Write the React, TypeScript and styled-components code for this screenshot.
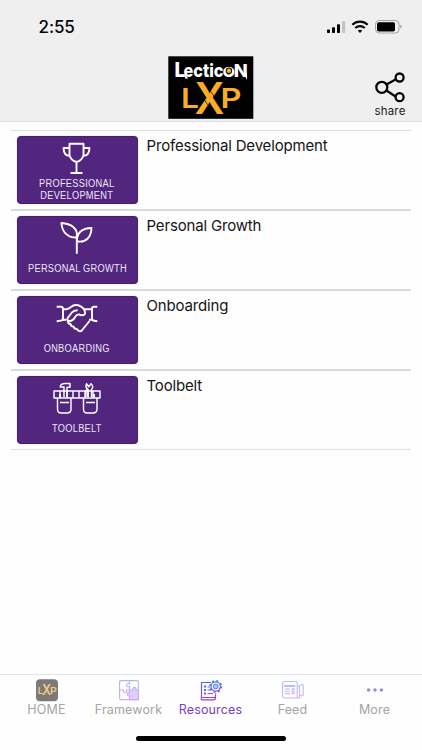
import React from "react";
import styled, { createGlobalStyle } from "styled-components";

const GlobalStyle = createGlobalStyle`
  * { box-sizing: border-box; }
  body { margin: 0; background: #fefefe; font-family: Inter, "Liberation Sans", sans-serif; }
  svg { display: block; flex: none; }
`;

const Screen = styled.div`
  width: 422px;
  height: 750px;
  display: flex;
  flex-direction: column;
  overflow: hidden;
  background: #fefefe;
`;

const Header = styled.header`
  height: 122px;
  flex: none;
  background: #efefef;
  border-bottom: 1px solid #dcdfea;
`;

const StatusBar = styled.div`
  height: 56px;
  display: flex;
  justify-content: space-between;
  padding: 17px 19px 0 38.5px;
`;

const Clock = styled.div`
  font-size: 17px;
  line-height: 21px;
  font-weight: 500;
  letter-spacing: -0.1px;
  color: #080808;
`;

const Brand = styled.div`
  display: grid;
  grid-template-columns: 1fr 86px 1fr;
`;

const LogoCell = styled.div`
  grid-column: 2;
`;

const ShareButton = styled.button`
  justify-self: end;
  width: 40px;
  margin: 15px 12px 0 0;
  padding: 0;
  border: 0;
  background: none;
  display: flex;
  flex-direction: column;
  align-items: center;
  gap: 1px;
  font: 400 11.5px/14px Inter, sans-serif;
  letter-spacing: 0.2px;
  color: #222;
`;

const List = styled.main`
  flex: 1;
  padding: 8px 11px 0;
`;

const Row = styled.div<{ $first?: boolean }>`
  height: ${(p) => (p.$first ? 81 : 80)}px;
  display: flex;
  gap: 9px;
  padding: 5px 0 0 5.5px;
  border-top: ${(p) => (p.$first ? "1px solid #e0e0e0" : "0")};
  border-bottom: 2px solid #dadada;
  &:last-child { height: 79px; border-bottom: 1px solid #e0e0e0; }
`;

const Card = styled.div`
  width: 121px;
  height: 68px;
  flex: none;
  display: flex;
  flex-direction: column;
  align-items: center;
  border-radius: 4px;
  border: 1px solid #432069;
  background: #52257f;
  box-shadow: 0 0 1px #8c78a0;
`;

const CardLabel = styled.div<{ $top: number }>`
  margin-top: ${(p) => p.$top}px;
  font: 400 10px/12px "Liberation Sans", Arial, sans-serif;
  letter-spacing: 0.3px;
  transform: scaleX(0.925);
  text-align: center;
  white-space: pre;
  color: #eee6f6;
`;

const Title = styled.div`
  margin-top: 1px;
  font-size: 15px;
  line-height: 18px;
  letter-spacing: -0.17px;
  color: #151515;
`;

const TabBar = styled.nav`
  height: 76px;
  flex: none;
  display: grid;
  grid-template-columns: repeat(5, 82px);
  justify-content: center;
  grid-template-rows: 61px 6px;
  padding-right: 1px;
  border-top: 1px solid #dfe2f2;
`;

const Tab = styled.div<{ $active?: boolean }>`
  display: flex;
  flex-direction: column;
  align-items: center;
  padding-top: 4px;
  font-size: 12.5px;
  line-height: 16px;
  letter-spacing: 0.15px;
  color: ${(p) => (p.$active ? "#7c3fca" : "#a5a5a5")};
`;

const HomeIndicator = styled.div`
  grid-column: 1 / -1;
  justify-self: center;
  width: 150px;
  height: 5px;
  margin-left: 1px;
  border-radius: 3px;
  background: #000;
`;

const StatusIcons = () => (
  <svg width="80" height="20" viewBox="323 17 80 20">
    <rect x="327" y="29.5" width="3" height="3.5" rx=".8" />
    <rect x="332" y="27.3" width="3" height="5.7" rx=".8" />
    <rect x="337" y="24.3" width="3" height="8.7" rx=".8" />
    <rect x="342" y="21.2" width="3.2" height="11.8" rx=".8" fill="#c4c4c4" />
    <g fill="none" stroke="#080808" strokeWidth="2.1">
      <path d="M352.3 24.8a11 11 0 0 1 15.4 0" />
      <path d="M355.2 28a7 7 0 0 1 9.6 0" />
    </g>
    <path d="M357.7 30.6q2.3-1.7 4.6 0L360 33Z" />
    <rect x="375.5" y="20.5" width="23.5" height="12.5" rx="3.7" fill="none" stroke="#a3a3a3" />
    <rect x="377" y="22.2" width="18" height="9.3" rx="1.8" />
    <path d="M400.3 24.8q3 1.9 0 3.8Z" fill="#999" />
  </svg>
);

const Logo = () => (
  <svg width="86" height="63" viewBox="0 0 86 63">
    <rect x=".3" y=".3" width="85" height="62.5" fill="#000" />
    <text y="20.5" fontFamily="Inter, sans-serif" fontWeight="800" fill="#fff">
      <tspan x="6.5" fontSize="20" textLength="11" lengthAdjust="spacingAndGlyphs">L</tspan>
      <tspan x="15.5" fontSize="18.5" textLength="40" lengthAdjust="spacingAndGlyphs">ectic</tspan>
      <tspan x="54.5" fontSize="18" textLength="12.5" lengthAdjust="spacingAndGlyphs">o</tspan>
      <tspan x="65.8" fontSize="17.5" textLength="14" lengthAdjust="spacingAndGlyphs">N</tspan>
    </text>
    <path d="m75.5 17 3.5 7V17ZM17 19l3.5 3.5H17Z" fill="#fff" />
    <circle cx="60.9" cy="14.7" r="3.2" fill="#000" />
    <circle cx="60.9" cy="14.7" r="2.3" fill="#f9ae25" />
    <text fontFamily="Inter, sans-serif" fontWeight="600" fill="#f9ae25">
      <tspan x="13" y="51.7" fontSize="26.5" textLength="18" lengthAdjust="spacingAndGlyphs">L</tspan>
      <tspan x="26.5" y="58" fontSize="43.5" fontWeight="600" textLength="30" lengthAdjust="spacingAndGlyphs">X</tspan>
      <tspan x="52.5" y="51.7" fontSize="26.5" textLength="21" lengthAdjust="spacingAndGlyphs">P</tspan>
    </text>
    <path d="m43 35.5 3.7 6M36.3 43.5l3.7 6" stroke="#000" strokeWidth=".7" />
  </svg>
);

const ShareIcon = () => (
  <svg width="32" height="32" viewBox="0 0 32 32" fill="none" stroke="#050505" strokeWidth="2.3">
    <path d="m12.5 13.5 9-5m-9 11 9 6" />
    <circle cx="7.8" cy="16.3" r="5.5" />
    <circle cx="25.6" cy="6.5" r="4" />
    <circle cx="25.6" cy="26.2" r="4" />
  </svg>
);

const cardIcon = {
  width: 50,
  height: 40,
  viewBox: "0 0 50 40",
  fill: "none",
  stroke: "#fff",
  strokeWidth: 1.9,
  strokeLinejoin: "round" as const,
};

const TrophyIcon = () => (
  <svg {...cardIcon}>
    <path d="M17.5 6.8h14v11.4q-1.5 5.3-7 6.8-5.5-1.5-7-6.8ZM17.5 11h-6q.2 7.8 6.2 7.8M31.5 11h6q-.2 7.8-6.2 7.8M24.5 25v10.5M18.5 36h12" />
  </svg>
);

const SproutIcon = () => (
  <svg {...cardIcon}>
    <path d="M24.8 36.7V20.5C15 20.8 10 14.5 9.4 6c9.5.6 17 5.2 15.4 14.5M25 24.3c-.5-8 4.5-13 14.5-13.3-.2 8.5-5 15-14.5 13.3Z" />
  </svg>
);

const HandshakeIcon = () => (
  <svg {...cardIcon}>
    <path d="M4.7 9.8H9q2 0 2 2.2v9q0 2.6-2.3 2.6l-4 .6M45.3 9.8H42q-2 0-2 2.2v9q0 2.6 2.2 2.8l3.1.4" />
    <path d="M11 12.2h3.5C18.5 12 19 8 24 8q4.5 0 8 4.2h8M11 22.8h3.5M40 22.8h-3" />
    <path d="M32 12.2q2.8 5.3-1.2 6-2.4.2-4-.8-2.2 0-3.7 2.6-2 3.8-5.6 4-2.6-.2-2-2.7l4.2-5.6q2.2-2.6 6-2.5" />
    <path d="M16 24q-.2 2.8 2.6 3 .1 2.6 3 2.6.3 2.3 3 2.3l2 1.8q1.8 1.3 3.2-.2l7.7-9.5" />
  </svg>
);

const ToolbeltIcon = () => (
  <svg {...cardIcon} strokeWidth={1.45}>
    <path d="M2 14h46v7H2ZM8 14v7M15 14v7M21 14v7M27 14v7M33 14v7M41 14v7" />
    <path d="M5.5 21v11q0 4 3.5 4h6q4 0 4-4V21M31.5 21v11q0 4 3.5 4h6q4 0 4-4V21M8 25.4h9M34 25.4h9" />
    <path d="M12 20V10H8.2Q8.5 6.5 13 6.5h5v3.7h-3V20M34 20v-6q0-1.4 2-1.3v7" />
    <path d="M36 20v-7.5q-3.2-2.4-1.5-5.8l2.3 3.1 2.2-3.1q3.2 3 .5 5.8V20" />
    <path d="M8 20v-3M42 20v-3" strokeWidth="2" />
  </svg>
);

const HomeIcon = () => (
  <svg width="22" height="23" viewBox="0 0 22 23">
    <rect width="22" height="22" y=".2" rx="4" fill="#7b7a78" />
    <text fontFamily="Inter, sans-serif" fontWeight="600" fill="#f0c880">
      <tspan x="1.8" y="14.5" fontSize="9" textLength="5.4" lengthAdjust="spacingAndGlyphs">L</tspan>
      <tspan x="6" y="16.3" fontSize="14.5" textLength="9.3" lengthAdjust="spacingAndGlyphs">X</tspan>
      <tspan x="14" y="14.5" fontSize="9" textLength="7" lengthAdjust="spacingAndGlyphs">P</tspan>
    </text>
  </svg>
);

const Gradient = ({ id, from, to }: { id: string; from: string; to: string }) => (
  <defs>
    <linearGradient id={id} x1="0" y1="0" x2="0" y2="23" gradientUnits="userSpaceOnUse">
      <stop stopColor={from} />
      <stop offset="1" stopColor={to} />
    </linearGradient>
  </defs>
);

const PuzzleIcon = () => (
  <svg width="22" height="23" viewBox="0 0 22 23" fill="none" stroke="url(#puzzle)" strokeWidth="1.1">
    <Gradient id="puzzle" from="#9ebdf9" to="#dda2f8" />
    <path d="M11.5 20.6v-4c-3 1.4-3-4 0-2.5V11H15c-1-3.5 4-3.5 3 0h2.4v9.6Z" fill="#dfd0fb" />
    <rect x="1.6" y="1.6" width="18.8" height="19" rx="1.3" />
    <path d="M11.5 1.6v3.2c-4-1.3-4 4 0 2.7V11H8.5c1.4 3.6-4 3.6-2.8 0H1.6" />
  </svg>
);

const ResourcesIcon = () => (
  <svg width="24" height="23" viewBox="0 0 24 23" fill="none" stroke="url(#resources)" strokeWidth="1.2">
    <Gradient id="resources" from="#397cf0" to="#a937e4" />
    <path d="M12 3.5H2.5v15h14v-4M2.5 18.5q-1 2.3 1 2.3h11q2 0 2-2.3" />
    <path d="M5 7.5h2M5 11h2M5 14.5h2" strokeWidth="2" />
    <path d="M8.5 8H11M8.5 11H12M8.5 14.5H14" />
    <circle cx="16.7" cy="7.5" r="4.7" strokeWidth="1.2" />
    <circle cx="16.7" cy="7.5" r="5.7" strokeWidth="1.6" strokeDasharray="1.9 2.58" />
    <circle cx="16.7" cy="7.5" r="2.4" fill="#9bcaf8" strokeWidth=".9" />
  </svg>
);

const FeedIcon = () => (
  <svg width="24" height="23" viewBox="0 0 24 23" fill="none" stroke="url(#feed)" strokeWidth="1.1">
    <Gradient id="feed" from="#a6c2fb" to="#dfaafa" />
    <path d="M3.5 2.5H15q1.2 0 1.2 1.2V19h-13Q1.6 19 1.6 17V4.2q0-1.7 1.9-1.7ZM16.2 7h2.3v12h-4M18.5 5.7h3.7v10.6h-3.7" />
    <path d="M4 7.2h9.5v-.4H4Z" strokeWidth="1.6" />
    <path d="M4 10h5M4 12.3h5M4 14.6h5M11.3 9.8h1.8v5h-1.8Z" />
  </svg>
);

const MoreIcon = () => (
  <svg width="22" height="23" viewBox="0 0 22 23" fill="#a08bd8">
    <circle cx="4.6" cy="11" r="1.8" />
    <circle cx="11" cy="11" r="1.8" />
    <circle cx="17.4" cy="11" r="1.8" />
  </svg>
);

const resources = [
  { title: "Professional Development", label: "PROFESSIONAL\nDEVELOPMENT", top: 1, Icon: TrophyIcon },
  { title: "Personal Growth", label: "PERSONAL GROWTH", top: 6, Icon: SproutIcon },
  { title: "Onboarding", label: "ONBOARDING", top: 6, Icon: HandshakeIcon },
  { title: "Toolbelt", label: "TOOLBELT", top: 6, Icon: ToolbeltIcon },
];

const tabs = [
  { name: "HOME", Icon: HomeIcon },
  { name: "Framework", Icon: PuzzleIcon },
  { name: "Resources", Icon: ResourcesIcon, active: true },
  { name: "Feed", Icon: FeedIcon },
  { name: "More", Icon: MoreIcon },
];

export default function App() {
  return (
    <Screen>
      <GlobalStyle />
      <Header>
        <StatusBar>
          <Clock>2:55</Clock>
          <StatusIcons />
        </StatusBar>
        <Brand>
          <LogoCell><Logo /></LogoCell>
          <ShareButton><ShareIcon />share</ShareButton>
        </Brand>
      </Header>
      <List>
        {resources.map(({ title, label, top, Icon }, i) => (
          <Row key={title} $first={i === 0}>
            <Card>
              <Icon />
              <CardLabel $top={top}>{label}</CardLabel>
            </Card>
            <Title>{title}</Title>
          </Row>
        ))}
      </List>
      <TabBar>
        {tabs.map(({ name, Icon, active }) => (
          <Tab key={name} $active={active}>
            <Icon />
            {name}
          </Tab>
        ))}
        <HomeIndicator />
      </TabBar>
    </Screen>
  );
}
